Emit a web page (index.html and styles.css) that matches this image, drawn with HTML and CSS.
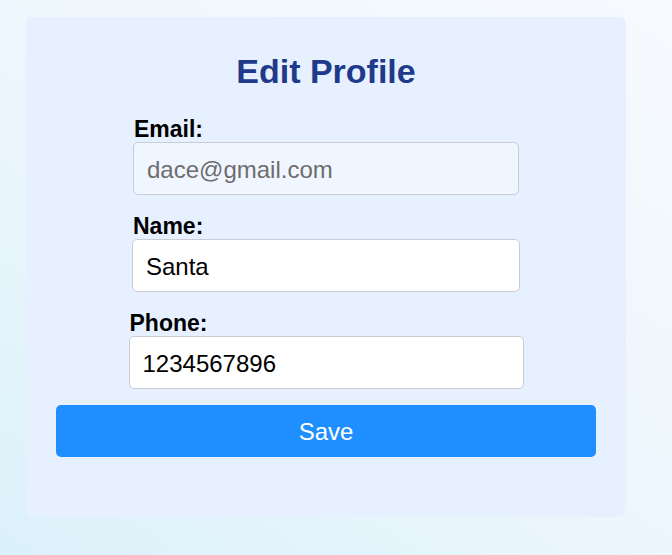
FILE: index.html
```html
<!DOCTYPE html>
<html>
<head>
<meta charset="utf-8">
<link rel="stylesheet" href="styles.css">
</head>
<body>
<div class="card">
  <h2 class="title">Edit Profile</h2>
  <form class="form">
    <div class="group group-email">
      <label class="label">Email:</label>
      <input class="input input-readonly" type="text" value="dace@gmail.com" readonly>
    </div>
    <div class="group group-name">
      <label class="label">Name:</label>
      <input class="input" type="text" value="Santa">
    </div>
    <div class="group group-phone">
      <label class="label">Phone:</label>
      <input class="input" type="text" value="1234567896">
    </div>
    <button class="save" type="button">Save</button>
  </form>
</div>
</body>
</html>
```
FILE: styles.css
```css
html, body {
  margin: 0;
  height: 100%;
}
body {
  padding: 17px 26px;
  box-sizing: border-box;
  background: linear-gradient(35deg, #dbf1fa 0%, #ecf6fc 45%, #f7fafe 100%);
  font-family: "Liberation Sans", Arial, sans-serif;
}
.card {
  width: 600px;
  height: 500px;
  box-sizing: border-box;
  background: #e7f0ff;
  border-radius: 6px;
  padding: 35px 30px 0;
}
.title {
  margin: 0 0 27px;
  text-align: center;
  font-size: 34px;
  font-weight: bold;
  color: #1f3a8a;
  line-height: 38px;
}
.form {
  display: flex;
  flex-direction: column;
  align-items: center;
}
.group {
  display: flex;
  flex-direction: column;
  margin-bottom: 19px;
}
.group-email { width: 386px; }
.group-name { width: 388px; }
.group-phone { width: 395px; margin-bottom: 16px; }
.label {
  font-size: 23px;
  font-weight: bold;
  line-height: 25px;
  color: #000;
  padding-left: 1px;
}
.input {
  height: 53px;
  box-sizing: border-box;
  border: 1px solid #c9ccd2;
  border-radius: 5px;
  background: #fff;
  padding: 2px 13px 0;
  font-family: "Liberation Sans", Arial, sans-serif;
  font-size: 24px;
  color: #000;
  outline: none;
}
.input-readonly {
  background: #f0f6ff;
  color: #6d6d6d;
}
.save {
  width: 540px;
  height: 52px;
  border: none;
  border-radius: 5px;
  background: #1f8fff;
  color: #fff;
  font-family: "Liberation Sans", Arial, sans-serif;
  font-size: 24px;
  padding-top: 2px;
}
```
